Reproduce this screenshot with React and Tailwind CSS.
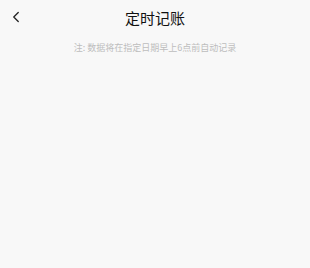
import { ChevronLeft } from "lucide-react";

export default function App() {
  return (
    <div
      className="w-[310px] h-[268px] bg-[#f8f8f8] flex flex-col"
      style={{ fontFamily: '"Noto Sans CJK SC", "Noto Sans", sans-serif' }}
    >
      <div className="relative h-[37px] flex items-center justify-center">
        <button className="absolute left-[7px] top-[8px] text-[#222]">
          <ChevronLeft size={18} strokeWidth={1.75} />
        </button>
        <h1 className="text-[15px] text-[#111] font-normal">定时记账</h1>
      </div>
      <p className="mt-[4px] text-center text-[9px] text-[#bdbdbd] leading-[14px]">
        注: 数据将在指定日期早上6点前自动记录
      </p>
    </div>
  );
}
